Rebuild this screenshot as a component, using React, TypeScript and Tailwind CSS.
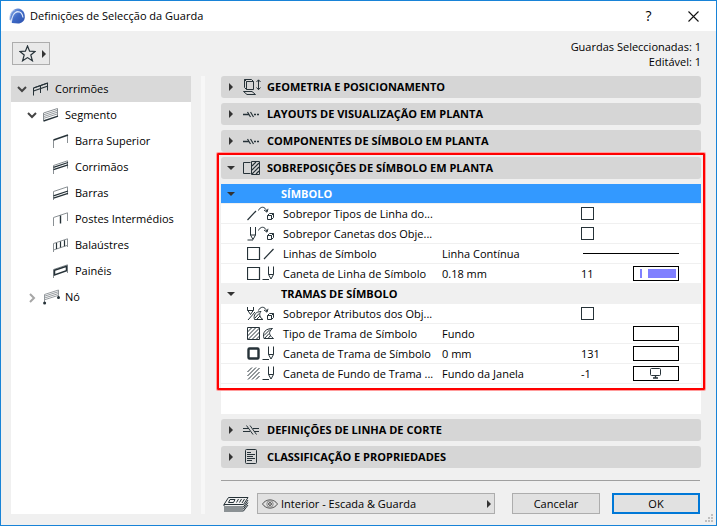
import type { ReactNode } from "react";
import clsx from "clsx";

const INK = "#263238";
const GREY = "#8a9094";

type IconProps = { children: ReactNode; w?: number; h?: number };

const Icon = ({ children, w = 16, h = 16 }: IconProps) => (
  <svg
    width={w}
    height={h}
    viewBox={`0 0 ${w} ${h}`}
    fill="none"
    stroke={INK}
    strokeWidth="1"
    className="shrink-0"
    aria-hidden="true"
  >
    {children}
  </svg>
);

const ArrowRight = () => (
  <svg width="4" height="8" viewBox="0 0 4 8" className="shrink-0" aria-hidden="true">
    <path d="M0 0 L4 4 L0 8 Z" fill="#333" />
  </svg>
);

const ArrowDown = () => (
  <svg width="8" height="4" viewBox="0 0 8 4" className="shrink-0" aria-hidden="true">
    <path d="M0 0 H8 L4 4 Z" fill="#333" />
  </svg>
);

const Logo = () => (
  <svg width="16" height="16" viewBox="0 0 16 16" aria-hidden="true">
    <defs>
      <linearGradient id="ball" x1="0" y1="0" x2="1" y2="1">
        <stop offset="0" stopColor="#8fb0ea" />
        <stop offset="0.5" stopColor="#3f6ac6" />
        <stop offset="1" stopColor="#2b50ad" />
      </linearGradient>
    </defs>
    <path d="M1 11 C0.5 4 5 0.3 9 0.5 C14 1 16 5 15.8 9.5 C15.5 13 12.5 15.3 9 15.6 L3 15 Z" fill="url(#ball)" />
    <path d="M2.2 14.8 C2.6 9 5 4 8.8 3.6 C11.6 3.6 13.4 6 14 9.5" fill="none" stroke="#dbe6fa" strokeWidth="1.2" />
    <path d="M0.8 12 C0.6 6.5 2.6 3.4 6 1.6" fill="none" stroke="#b5c9ee" strokeWidth="1" />
  </svg>
);

/* ---------- tree ---------- */

const treeIcons: Record<string, ReactNode> = {
  railing: (
    <Icon w={16} h={14}>
      <path d="M0.5 13.5 V6 L14.5 1 V8.5 M7.5 11 V3.5" />
      <path d="M0.5 6 L15 1 M0.5 9 L15 4" strokeWidth="1.3" />
    </Icon>
  ),
  segment: (
    <Icon w={16} h={14}>
      <path d="M0.5 12.5 V5 L14.5 0.5 V8" stroke={GREY} />
      <path d="M0.5 6.8 L14.5 2.3 M0.5 8.6 L14.5 4.1 M0.5 10.4 L14.5 5.9" stroke={GREY} strokeWidth="0.9" />
      <path d="M0.5 13 L15 8.2" strokeWidth="1.4" />
    </Icon>
  ),
  top: (
    <Icon w={16} h={14}>
      <path d="M0.5 14 V6 M14.5 1 V9" stroke={GREY} />
      <path d="M0.5 6 L15 1" strokeWidth="1.5" />
    </Icon>
  ),
  handrail: (
    <Icon w={16} h={14}>
      <path d="M0.5 14 V5.5 L14.5 0.8 V8.5" stroke={GREY} />
      <path d="M0.5 7.3 L15 2.5 M0.5 9.6 L15 4.8" strokeWidth="1.3" />
    </Icon>
  ),
  rails: (
    <Icon w={16} h={14}>
      <path d="M0.5 14 V5.5 L14.5 0.8 V8.5" stroke={GREY} />
      <path d="M0.5 9.8 L15 5 M0.5 12.1 L15 7.3" strokeWidth="1.3" />
    </Icon>
  ),
  posts: (
    <Icon w={16} h={14}>
      <path d="M0.5 14 V5.5 L14.5 0.8 V9" stroke={GREY} />
      <path d="M7.5 3.5 V11.5" strokeWidth="1.4" />
    </Icon>
  ),
  balusters: (
    <Icon w={16} h={14}>
      <path d="M0.5 14 V5.5 L14.5 0.8 V9 M0.5 12 L14.5 7.3" stroke={GREY} />
      <path d="M3.5 5 V11 M7.5 3.5 V9.5 M11.5 2.3 V8.3" strokeWidth="1.2" />
    </Icon>
  ),
  panels: (
    <Icon w={16} h={14}>
      <path d="M0.5 14 V5.5 L14.5 0.8 V9" stroke={GREY} />
      <path d="M1.5 6.3 L13.5 2.2 V6.8 L1.5 11 Z" strokeWidth="1.5" />
    </Icon>
  ),
  node: (
    <Icon w={18} h={16}>
      <path
        d="M1.5 14 V5.5 L15.5 1 V9 M1.5 7.2 L15.5 2.7 M1.5 9 L15.5 4.5 M1.5 10.8 L15.5 6.3"
        stroke={GREY}
        strokeWidth="0.9"
      />
      <circle cx="1.6" cy="14" r="1.5" fill={INK} stroke="none" />
      <circle cx="15.5" cy="8.5" r="1.5" fill={INK} stroke="none" />
    </Icon>
  ),
};

type TreeNode = {
  label: string;
  icon: string;
  level: 0 | 1 | 2;
  state?: "open" | "closed";
};

const treeNodes: TreeNode[] = [
  { label: "Corrimões", icon: "railing", level: 0, state: "open" },
  { label: "Segmento", icon: "segment", level: 1, state: "open" },
  { label: "Barra Superior", icon: "top", level: 2 },
  { label: "Corrimãos", icon: "handrail", level: 2 },
  { label: "Barras", icon: "rails", level: 2 },
  { label: "Postes Intermédios", icon: "posts", level: 2 },
  { label: "Balaústres", icon: "balusters", level: 2 },
  { label: "Painéis", icon: "panels", level: 2 },
  { label: "Nó", icon: "node", level: 1, state: "closed" },
];

const indents = ["pl-[6px]", "pl-[16px]", "pl-[26px]"];

const Tree = () => (
  <ul className="w-[180px] shrink-0 bg-white">
    {treeNodes.map((node) => (
      <li key={node.label}>
        <button
          type="button"
          className={clsx(
            "flex h-[26px] w-full items-center text-left",
            indents[node.level],
            node.level === 0 && "bg-[#d9d9d9]"
          )}
        >
          <span className="flex w-4 shrink-0 items-center">
            {node.state === "open" && (
              <svg width="10" height="8" viewBox="0 0 10 8" fill="none" stroke="#444" strokeWidth="2" aria-hidden="true">
                <path d="M1 2 L5 6 L9 2" />
              </svg>
            )}
            {node.state === "closed" && (
              <svg width="10" height="12" viewBox="0 0 10 12" fill="none" stroke="#a6a6a6" strokeWidth="2" aria-hidden="true">
                <path d="M3 3 L7 7 L3 11" />
              </svg>
            )}
          </span>
          <span className="flex w-[22px] shrink-0">{treeIcons[node.icon]}</span>
          {node.label}
        </button>
      </li>
    ))}
  </ul>
);

/* ---------- section headers ---------- */

const BreakLine = () => (
  <Icon w={18} h={18}>
    <path d="M0 9.5 H6 M11 9.5 H13 M14 9.5 H16" strokeWidth="1.6" />
    <path d="M4.5 7 L7.5 12 M7.5 7 L10.5 12" strokeWidth="1.2" />
  </Icon>
);

const sectionIcons: Record<string, ReactNode> = {
  geometry: (
    <Icon w={18} h={18}>
      <path d="M3.5 3.5 H10.5 V11.5 H3.5 Z M1.5 1.5 H8.5 L10.5 3.5 M1.5 1.5 V9.5 L3.5 11.5 M1.5 1.5 L3.5 3.5" />
      <path d="M0.5 13.5 H9 L12.5 16.5 H4 Z" />
      <path d="M15.5 2 V11.5 M13.5 4 L15.5 1.8 L17.5 4 M13.5 9.5 L15.5 11.7 L17.5 9.5" />
    </Icon>
  ),
  line: <BreakLine />,
  override: (
    <Icon w={18} h={18}>
      <path d="M7.5 14.5 H0.5 V3.5 H7.5" />
      <path d="M8.5 2.5 H16.5 V15.5 H8.5 Z" />
      <path d="M9 7 L13 3 M9 11 L16 4 M9 15 L16 8 M13 15 L16 12" strokeWidth="1.2" />
    </Icon>
  ),
  cut: (
    <Icon w={18} h={18}>
      <path d="M0 7.5 H6 M0 10.5 H7 M10 7.5 H16 M11 10.5 H16" />
      <path d="M3.5 4.5 L10 13.5 M7 4.5 L13.5 13.5" />
    </Icon>
  ),
  list: (
    <Icon w={18} h={18}>
      <rect x="2.5" y="1.5" width="11" height="14" rx="1" />
      <path d="M4 4.5 H8 M4 6.5 H12 M4 8.5 H10 M4 10.5 H12 M4 12.5 H9" />
    </Icon>
  ),
};

type SectionHeaderProps = { icon: string; title: string; open?: boolean };

const SectionHeader = ({ icon, title, open = false }: SectionHeaderProps) => (
  <button
    type="button"
    aria-expanded={open}
    className="flex h-[22px] w-full items-center rounded-[3px] bg-[#d6d6d6] text-left font-bold"
  >
    <span className="flex w-5 shrink-0 justify-center">
      {open ? <ArrowDown /> : <ArrowRight />}
    </span>
    <span className="flex w-[26px] shrink-0 pl-[2px]">{sectionIcons[icon]}</span>
    {title}
  </button>
);

/* ---------- parameter table ---------- */

const BendArrow = () => (
  <g transform="translate(11 0)">
    <path d="M0.5 4.5 C2 0.5 7 -0.5 8.8 5.5" />
    <path d="M6 4 L9 6.2 L10 2.8" />
    <path d="M9.5 9.5 H13.5 V13.5 H9.5 Z M9.5 9.5 L11.5 7.5 H15.5 L13.5 9.5 M15.5 7.5 V11.5 L13.5 13.5" />
  </g>
);

const Pencil = () => (
  <g transform="translate(15 0)">
    <path d="M6.5 0.5 V8.5 L9 13 L11.5 8.5 V0.5 M6.5 8.5 H11.5" />
    <path d="M0.5 13.5 H7" />
  </g>
);

const Hatch = () => <path d="M0.5 6 L5 1.5 M0.5 10 L9 1.5 M1 13.5 L12.5 2 M5 13.5 L12.5 6 M9 13.5 L12.5 10" />;

const rowIcons: Record<string, ReactNode> = {
  lineOverride: (
    <Icon w={30} h={15}>
      <path d="M0.5 14 L9 5" strokeWidth="1.2" />
      <BendArrow />
    </Icon>
  ),
  penOverride: (
    <Icon w={30} h={15}>
      <path d="M3.5 1 V9 L6 13.5 L8.5 9 V1 M3.5 9 H8.5 M0.5 14 H6" />
      <BendArrow />
    </Icon>
  ),
  boxLine: (
    <Icon w={30} h={15}>
      <path d="M0.5 1.5 H12.5 V13.5 H0.5 Z M17 13 L26.5 3" strokeWidth="1.2" />
    </Icon>
  ),
  boxPen: (
    <Icon w={30} h={15}>
      <path d="M0.5 1.5 H12.5 V13.5 H0.5 Z" strokeWidth="1.2" />
      <Pencil />
    </Icon>
  ),
  fillOverride: (
    <Icon w={30} h={15}>
      <path d="M0.5 1 V4 L3.5 8.5 L6.5 4 V1 M0.5 4.5 H6.5 M1 14 L8 6" />
      <path d="M7.5 13.5 C6 9 9 5.5 14 5.5 C11.5 8 13 12 16 13.5 Z M8 12 L12 7.5 M10 13 L13 10" />
      <BendArrow />
    </Icon>
  ),
  boxFill: (
    <Icon w={30} h={15}>
      <path d="M0.5 1.5 H12.5 V13.5 H0.5 Z" />
      <Hatch />
      <path d="M17 12.5 C15 6 19 2.5 25.5 2.5 C21 6 22 9.5 26.5 12.5 Z M17 9.5 L23 3.5 M17.5 12.5 L22 7.5 M21 12.5 L23.5 9.5" />
    </Icon>
  ),
  thickPen: (
    <Icon w={30} h={15}>
      <rect x="1.5" y="2.5" width="10" height="10" rx="1" strokeWidth="2.4" />
      <Pencil />
    </Icon>
  ),
  hatchPen: (
    <Icon w={30} h={15}>
      <Hatch />
      <Pencil />
    </Icon>
  ),
};

type Row = {
  label: string;
  icon: string;
  value?: string;
  kind: "check" | "line" | "pen" | "fill" | "screen";
  number?: string;
};

type Group = { title: string; active: boolean; rows: Row[] };

const groups: Group[] = [
  {
    title: "SÍMBOLO",
    active: true,
    rows: [
      { label: "Sobrepor Tipos de Linha do...", icon: "lineOverride", kind: "check" },
      { label: "Sobrepor Canetas dos Obje...", icon: "penOverride", kind: "check" },
      { label: "Linhas de Símbolo", icon: "boxLine", value: "Linha Contínua", kind: "line" },
      { label: "Caneta de Linha de Símbolo", icon: "boxPen", value: "0.18 mm", number: "11", kind: "pen" },
    ],
  },
  {
    title: "TRAMAS DE SÍMBOLO",
    active: false,
    rows: [
      { label: "Sobrepor Atributos dos Obj...", icon: "fillOverride", kind: "check" },
      { label: "Tipo de Trama de Símbolo", icon: "boxFill", value: "Fundo", kind: "fill" },
      { label: "Caneta de Trama de Símbolo", icon: "thickPen", value: "0 mm", number: "131", kind: "fill" },
      { label: "Caneta de Fundo de Trama ...", icon: "hatchPen", value: "Fundo da Janela", number: "-1", kind: "screen" },
    ],
  },
];

const Swatch = ({ row }: { row: Row }) => (
  <button
    type="button"
    aria-label={row.label}
    className="flex h-[15px] w-[46px] items-center justify-center border border-black bg-white"
  >
    {row.kind === "pen" && (
      <span className="flex h-[9px] w-full gap-[6px] pr-[2px] pl-[6px]">
        <span className="w-[2px] bg-[#8080ff]" />
        <span className="flex-1 bg-[#8080ff]" />
      </span>
    )}
    {row.kind === "screen" && (
      <Icon w={12} h={11}>
        <rect x="0.5" y="0.5" width="10" height="7" rx="1" />
        <path d="M5.5 7.5 V10 M3 10 H8" strokeWidth="1.4" />
      </Icon>
    )}
  </button>
);

const ParamRow = ({ row }: { row: Row }) => {
  const id = `param-${row.icon}`;
  return (
    <tr className="h-5 bg-white">
      <td className="border-b border-[#f0f0f0] pl-[26px]">{rowIcons[row.icon]}</td>
      <td className="border-b border-[#f0f0f0]">
        {row.kind === "check" ? <label htmlFor={id}>{row.label}</label> : row.label}
      </td>
      <td className="border-b border-[#f0f0f0]">{row.value}</td>
      {row.kind === "line" ? (
        <td colSpan={2} className="border-b border-[#f0f0f0]">
          <div className="mr-[22px] ml-[2px] h-px bg-black" />
        </td>
      ) : (
        <>
          <td className="border-b border-[#f0f0f0]">
            {row.kind === "check" ? (
              <input
                id={id}
                type="checkbox"
                className="block size-[13px] appearance-none border border-[#263238] bg-white checked:bg-[#263238]"
              />
            ) : (
              row.number
            )}
          </td>
          <td className="border-b border-[#f0f0f0]">{row.kind !== "check" && <Swatch row={row} />}</td>
        </>
      )}
    </tr>
  );
};

const ParamTable = () => (
  <table className="w-full table-fixed border-separate border-spacing-0 whitespace-nowrap leading-[19px]">
    <colgroup>
      <col className="w-[62px]" />
      <col className="w-[159px]" />
      <col />
      <col className="w-[52px]" />
      <col className="w-[68px]" />
    </colgroup>
    {groups.map((group) => (
      <tbody key={group.title}>
        <tr className={clsx("h-5", group.active ? "bg-[#3399ff] text-white" : "bg-[#f0f0f0]")}>
          <th colSpan={5} scope="rowgroup" className="border-b border-[#f0f0f0] text-left font-bold">
            <span className="flex items-center">
              <span className="w-[60px] pl-[6px]">
                <ArrowDown />
              </span>
              {group.title}
            </span>
          </th>
        </tr>
        {group.rows.map((row) => (
          <ParamRow key={row.label} row={row} />
        ))}
      </tbody>
    ))}
  </table>
);

/* ---------- footer ---------- */

const LayersIcon = () => (
  <Icon w={26} h={17}>
    <path d="M5.5 2.5 H25 L20.5 9.5 H1 Z M7 4.5 H12 L10.5 7.5 H5.5 Z M15.5 4 L13.5 7.5 M18.5 4 L16.5 7.5 M21.5 4 L19 8" />
    <path d="M1 9.5 V11 M25 5 L20.5 12 H1 M25 7.5 L20.5 14 H1 M25 10 L20.5 16 H1" />
  </Icon>
);

const EyeIcon = () => (
  <Icon w={16} h={12}>
    <path d="M0.5 6 C4 0.5 12 0.5 15.5 6 C12 11.5 4 11.5 0.5 6 Z" stroke="#555" />
    <circle cx="8" cy="6" r="3.2" stroke="#888" />
    <circle cx="8" cy="6" r="1.4" stroke="#444" />
  </Icon>
);

const Footer = () => (
  <footer className="flex h-[21px] items-center">
    <span className="w-9 shrink-0 pl-[2px]">
      <LayersIcon />
    </span>
    <div className="relative flex-1">
      <select
        aria-label="Layer"
        className="block h-[21px] w-full appearance-none border border-[#adadad] bg-[#e1e1e1] pl-[23px]"
      >
        <option>Interior - Escada &amp; Guarda</option>
      </select>
      <span className="pointer-events-none absolute inset-y-0 left-[5px] flex items-center">
        <EyeIcon />
      </span>
      <span className="pointer-events-none absolute inset-y-0 right-[4px] flex items-center">
        <ArrowRight />
      </span>
    </div>
    <button type="button" className="ml-[17px] h-[21px] w-[88px] border border-[#adadad] bg-[#e1e1e1]">
      Cancelar
    </button>
    <button type="button" className="ml-3 h-[21px] w-[88px] border-2 border-[#0078d7] bg-[#e1e1e1]">
      OK
    </button>
  </footer>
);

export default function App() {
  return (
    <div className="relative flex min-h-screen flex-col border border-[#1883d7] bg-[#f0f0f0] font-['Open_Sans',sans-serif] text-[11px] leading-4 text-black">
      <header className="flex h-[30px] items-center bg-white pl-2">
        <Logo />
        <h1 className="ml-[5px] flex-1">Definições de Selecção da Guarda</h1>
        <button type="button" className="w-[45px] text-[14px]">
          ?
        </button>
        <button type="button" aria-label="Fechar" className="flex w-[45px] justify-center">
          <svg width="11" height="11" viewBox="0 0 11 11" stroke="#111" strokeWidth="1.1" aria-hidden="true">
            <path d="M0.5 0.5 L10.5 10.5 M10.5 0.5 L0.5 10.5" />
          </svg>
        </button>
      </header>

      <div className="flex h-[45px] items-center justify-between pr-[15px] pl-[11px]">
        <button
          type="button"
          aria-label="Favoritos"
          className="flex h-[23px] w-[38px] items-center gap-[6px] border border-[#adadad] bg-[#e9e9e9] pl-[6px]"
        >
          <Icon w={17} h={17}>
            <path d="M8.5 1 L10.6 6.2 L16 6.5 L11.8 10 L13.4 15.8 L8.5 12.6 L3.6 15.8 L5.2 10 L1 6.5 L6.4 6.2 Z" strokeWidth="1.2" />
          </Icon>
          <ArrowRight />
        </button>
        <div className="text-right leading-[15px]">
          <p>Guardas Seleccionadas: 1</p>
          <p>Editável: 1</p>
        </div>
      </div>

      <div className="flex flex-1 pr-[15px] pb-[11px] pl-[10px]">
        <Tree />
        <div className="mr-4 ml-[10px] w-1 shrink-0 bg-[#f7f7f7]" />
        <main className="flex min-w-0 flex-1 flex-col">
          <div className="mb-[5px] flex flex-col gap-[5px]">
            <SectionHeader icon="geometry" title="GEOMETRIA E POSICIONAMENTO" />
            <SectionHeader icon="line" title="LAYOUTS DE VISUALIZAÇÃO EM PLANTA" />
            <SectionHeader icon="line" title="COMPONENTES DE SÍMBOLO EM PLANTA" />
          </div>

          <section className="relative flex flex-col gap-[5px]">
            <SectionHeader icon="override" title="SOBREPOSIÇÕES DE SÍMBOLO EM PLANTA" open />
            <ParamTable />
            {/* red highlight around the open section */}
            <div className="pointer-events-none absolute -inset-x-1 -top-1 -bottom-[6px] rounded-[1px] border-2 border-[#f00] ring-1 ring-[#ff9c9c]" />
          </section>
          <div className="min-h-6 flex-1 bg-white" />

          <div className="mt-[5px] flex flex-col gap-[5px]">
            <SectionHeader icon="cut" title="DEFINIÇÕES DE LINHA DE CORTE" />
            <SectionHeader icon="list" title="CLASSIFICAÇÃO E PROPRIEDADES" />
          </div>
          <div className="mr-px">
            <hr className="my-3 border-[#a0a0a0]" />
            <Footer />
          </div>
        </main>
      </div>

      {/* resize grip */}
      <svg width="8" height="8" viewBox="0 0 8 8" fill="#bfbfbf" className="absolute right-[3px] bottom-[3px]" aria-hidden="true">
        <path d="M6 0h2v2h-2z M3 3h2v2h-2z M6 3h2v2h-2z M0 6h2v2h-2z M3 6h2v2h-2z M6 6h2v2h-2z" />
      </svg>
    </div>
  );
}
